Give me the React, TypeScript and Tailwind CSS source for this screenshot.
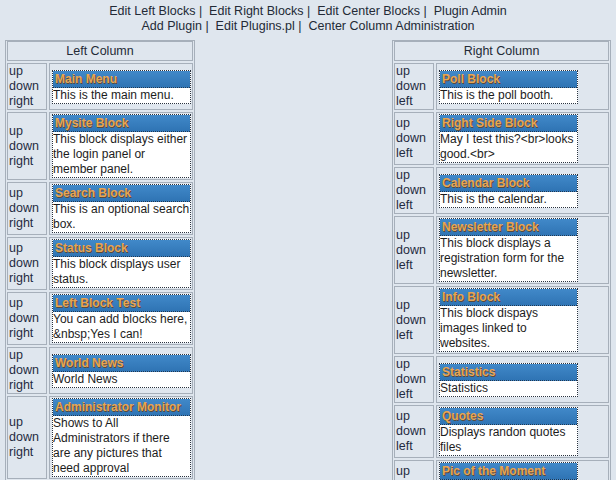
const leftBlocks = [
  { title: 'Main Menu', body: 'This is the main menu.' },
  { title: 'Mysite Block', body: 'This block displays either the login panel or member panel.' },
  { title: 'Search Block', body: 'This is an optional search box.' },
  { title: 'Status Block', body: 'This block displays user status.' },
  { title: 'Left Block Test', body: 'You can add blocks here, &nbsp;Yes I can!' },
  { title: 'World News', body: 'World News' },
  { title: 'Administrator Monitor', body: 'Shows to All Administrators if there are any pictures that need approval' },
]

const rightBlocks = [
  { title: 'Poll Block', body: 'This is the poll booth.' },
  { title: 'Right Side Block', body: 'May I test this?<br>looks good.<br>' },
  { title: 'Calendar Block', body: 'This is the calendar.' },
  { title: 'Newsletter Block', body: 'This block displays a registration form for the newsletter.' },
  { title: 'Info Block', body: 'This block dispays images linked to websites.' },
  { title: 'Statistics', body: 'Statistics' },
  { title: 'Quotes', body: 'Displays randon quotes files' },
  { title: 'Pic of the Moment', body: 'Shows a random picture from the gallery.' },
]

type Block = { title: string; body: string }

function BlockBox({ block }: { block: Block }) {
  return (
    <div className="w-[139px] shrink-0 border border-dotted border-[#2a3340] bg-white">
      <div className="h-[17px] border-b border-dotted border-[#1e3550] bg-gradient-to-b from-[#4189c9] to-[#2f74b4] pl-[2px] text-[12px] font-bold leading-[16px] text-[#e8a552] [text-shadow:1px_1px_0_#5a4a3a]">
        {block.title}
      </div>
      <div className="text-[12px] leading-[15px] text-[#1c1c1c]">{block.body}</div>
    </div>
  )
}

function Column({ title, blocks, side, width }: { title: string; blocks: Block[]; side: string; width: string }) {
  return (
    <div className={`${width} flex flex-col gap-[2px] self-start border border-[#a6afba] px-[1px] pb-[1px]`}>
      <div className="h-[20px] border border-[#a6afba] text-center leading-[18px]">{title}</div>
      {blocks.map((b) => (
        <div key={b.title} className="flex gap-[2px]">
          {/* up / down / move links */}
          <div className="flex w-[40px] shrink-0 flex-col justify-center border border-[#a6afba] pl-[1px] leading-[15px] text-[#1f2b42]">
            <span>up</span>
            <span>down</span>
            <span>{side}</span>
          </div>
          <div className="flex flex-1 items-center border border-[#a6afba] py-[1px] pl-[2px] pr-[1px]">
            <BlockBox block={b} />
          </div>
        </div>
      ))}
    </div>
  )
}

export default function App() {
  return (
    <div className="min-h-screen bg-[#dfe6ee] pt-[4px] font-['Liberation_Sans',Arial,sans-serif] text-[12.5px] text-[#232a36]">
      {/* admin links */}
      <div className="text-center leading-[15px]">
        <div>Edit Left Blocks |{'\u00a0'} Edit Right Blocks |{'\u00a0'} Edit Center Blocks |{'\u00a0'} Plugin Admin</div>
        <div>Add Plugin |{'\u00a0'} Edit Plugins.pl |{'\u00a0'} Center Column Administration</div>
      </div>

      <div className="mt-[6px] flex justify-between px-[5px]">
        <Column title="Left Column" blocks={leftBlocks} side="right" width="w-[190px]" />
        <Column title="Right Column" blocks={rightBlocks} side="left" width="w-[219px]" />
      </div>
    </div>
  )
}
